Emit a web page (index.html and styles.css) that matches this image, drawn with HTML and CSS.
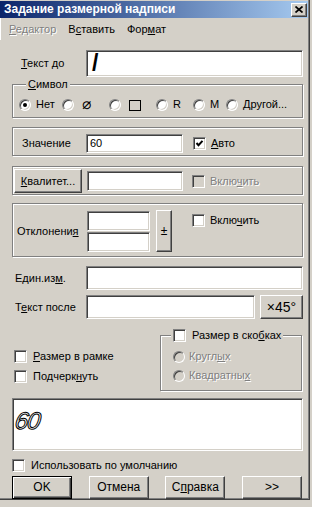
FILE: index.html
```html
<!DOCTYPE html>
<html lang="ru">
<head>
    <meta charset="UTF-8">
    <meta name="viewport" content="width=device-width, initial-scale=1.0">
    <title>Задание размерной надписи</title>
    <link rel="stylesheet" href="styles.css">
</head>
<body>
    <div class="window">
        <div class="titlebar">
            <span class="title">Задание размерной надписи</span>
            <span class="close-btn">
                <svg width="8" height="7" viewBox="0 0 8 7"><path d="M0.5 0.5 L7.5 6.5 M7.5 0.5 L0.5 6.5" stroke="#000" stroke-width="1.7" fill="none"/></svg>
            </span>
        </div>

        <div class="menubar">
            <span class="menu-item disabled"><u>Р</u>едактор</span>
            <span class="menu-item">В<u>с</u>тавить</span>
            <span class="menu-item">Фор<u>м</u>ат</span>
        </div>

        <div class="content">
            <div class="row row-before">
                <span class="row-label label-indent"><u>Т</u>екст до</span>
                <div class="edit"><span class="gost-slash">/</span></div>
            </div>

            <div class="group group-symbol">
                <div class="group-title"><u>С</u>имвол</div>
                <div class="symbol-options">
                    <span class="option"><span class="radio checked"></span><span>Нет</span></span>
                    <span class="option"><span class="radio"></span><span class="sym-diam">⌀</span></span>
                    <span class="option"><span class="radio"></span><span class="sym-square"></span></span>
                    <span class="option"><span class="radio"></span><span>R</span></span>
                    <span class="option"><span class="radio"></span><span>M</span></span>
                    <span class="option"><span class="radio"></span><span>Другой...</span></span>
                </div>
            </div>

            <div class="group group-value">
                <span class="value-label">Значение</span>
                <div class="edit edit-value">60</div>
                <span class="option check-right"><span class="check checked"><svg width="9" height="9" viewBox="0 0 9 9"><polyline points="1.5,4 3.5,6.2 7.5,1.8" stroke="#000" stroke-width="2" fill="none"/></svg></span><span><u>А</u>вто</span></span>
            </div>

            <div class="group group-quality">
                <button class="btn btn-quality"><span><u>К</u>валитет...</span></button>
                <div class="edit edit-quality"></div>
                <span class="option check-right disabled"><span class="check disabled"></span><span>Вклю<u>ч</u>ить</span></span>
            </div>

            <div class="group group-dev">
                <span class="dev-label">Отклонени<u>я</u></span>
                <div class="dev-inputs">
                    <div class="edit edit-dev"></div>
                    <div class="edit edit-dev"></div>
                </div>
                <button class="btn btn-pm">±</button>
                <span class="option dev-check"><span class="check"></span><span>Вклю<u>ч</u>ить</span></span>
            </div>

            <div class="row row-unit">
                <span class="row-label">Един.из<u>м</u>.</span>
                <div class="edit edit-line"></div>
            </div>

            <div class="row row-after">
                <span class="row-label">Т<u>е</u>кст после</span>
                <div class="edit edit-line"></div>
                <button class="btn btn-x45">×45°</button>
            </div>

            <div class="lower">
                <div class="lower-left">
                    <span class="option"><span class="check"></span><span><u>Р</u>азмер в рамке</span></span>
                    <span class="option"><span class="check"></span><span>Подчерк<u>н</u>уть</span></span>
                </div>
                <div class="group group-brackets">
                    <div class="group-title option"><span class="check"></span><span>Размер в ско<u>б</u>ках</span></div>
                    <div class="bracket-options">
                        <span class="option disabled"><span class="radio disabled"></span><span>Кругл<u>ы</u>х</span></span>
                        <span class="option disabled"><span class="radio disabled"></span><span>Квадратны<u>х</u></span></span>
                    </div>
                </div>
            </div>

            <div class="preview"><span class="preview-text">60</span></div>

            <span class="option default-check"><span class="check"></span><span>Использовать по умолчанию</span></span>

            <div class="buttons">
                <button class="btn btn-default">OK</button>
                <button class="btn">Отмена</button>
                <button class="btn"><span>С<u>п</u>равка</span></button>
                <button class="btn">&gt;&gt;</button>
            </div>
        </div>
    </div>
</body>
</html>
```

FILE: styles.css
```css
body {
    margin: 0;
    background-color: #d4d0c8;
    font-family: 'Liberation Sans', Arial, sans-serif;
    font-size: 11px;
    line-height: 13px;
    color: #000;
}
u {
    text-decoration: underline;
    text-underline-offset: 1px;
}
.window {
    width: 310px;
    height: 500px;
    box-sizing: border-box;
    padding-top: 1px;
    background-color: #d4d0c8;
    border-right: 1px solid #404040;
    border-bottom: 1px solid #404040;
    box-shadow: inset -1px -1px 0 #808080;
}

/* title and menu */
.titlebar {
    display: flex;
    align-items: center;
    justify-content: space-between;
    height: 17px;
    margin-right: 1px;
    padding: 0 1px 0 4px;
    background: linear-gradient(to right, #0a246a, #a6caf0);
}
.title {
    color: #fff;
    font-weight: bold;
    font-size: 12px;
}
.close-btn {
    display: flex;
    align-items: center;
    justify-content: center;
    width: 16px;
    height: 14px;
    box-sizing: border-box;
    background-color: #d4d0c8;
    border: 1px solid;
    border-color: #fff #404040 #404040 #fff;
    box-shadow: inset -1px -1px 0 #808080;
}
.menubar {
    display: flex;
    height: 22px;
    align-items: center;
    padding-left: 2px;
    border-left: 1px solid #fff;
}
.menu-item {
    padding: 0 6px;
}
.disabled {
    color: #808080;
    text-shadow: 1px 1px 0 #fff;
}

.content {
    padding: 0 6px 0 12px;
}

/* sunken edit field */
.edit {
    display: flex;
    align-items: center;
    box-sizing: border-box;
    padding: 0 3px;
    background-color: #fff;
    border: 1px solid;
    border-color: #808080 #fff #fff #808080;
    box-shadow: inset 1px 1px 0 #404040, inset -1px -1px 0 #d4d0c8;
}
.gost-slash {
    font-size: 23px;
    font-weight: bold;
    line-height: 23px;
    padding-left: 2px;
}

/* raised button */
.btn {
    display: flex;
    align-items: center;
    justify-content: center;
    box-sizing: border-box;
    padding: 0;
    font: inherit;
    color: #000;
    background-color: #d4d0c8;
    border: 1px solid;
    border-color: #fff #404040 #404040 #fff;
    box-shadow: inset -1px -1px 0 #808080;
}
.btn-default {
    border-color: #000;
    box-shadow: inset 1px 1px 0 #fff, inset -1px -1px 0 #404040, inset -2px -2px 0 #808080;
}

/* check boxes and radio buttons */
.option {
    display: flex;
    align-items: center;
    gap: 6px;
    height: 13px;
    white-space: nowrap;
}
.check {
    display: flex;
    align-items: center;
    justify-content: center;
    flex: none;
    width: 13px;
    height: 13px;
    box-sizing: border-box;
    background-color: #fff;
    border: 1px solid;
    border-color: #808080 #fff #fff #808080;
    box-shadow: inset 1px 1px 0 #404040, inset -1px -1px 0 #d4d0c8;
}
.check.disabled,
.radio.disabled {
    background-color: #d4d0c8;
}
.radio {
    display: flex;
    align-items: center;
    justify-content: center;
    flex: none;
    width: 12px;
    height: 12px;
    box-sizing: border-box;
    border-radius: 50%;
    background-color: #fff;
    border: 1px solid;
    border-color: #808080 #fff #fff #808080;
    box-shadow: inset 1px 1px 0 #404040, inset -1px -1px 0 #d4d0c8;
}
.radio.checked::after {
    content: "";
    width: 4px;
    height: 4px;
    border-radius: 50%;
    background-color: #000;
}

/* etched group frame */
.group {
    border: 1px solid #808080;
    box-shadow: inset 1px 1px 0 #fff, 1px 1px 0 #fff;
}
.group-title {
    width: fit-content;
    margin: -7px 0 0 7px;
    padding: 0 2px;
    background-color: #d4d0c8;
}

.row {
    display: flex;
    align-items: center;
}
.row-label {
    width: 74px;
    flex: none;
    box-sizing: border-box;
    padding-left: 3px;
}
.row-label.label-indent {
    padding-left: 9px;
}
.row-before {
    margin-top: 10px;
}
.row-before .edit {
    flex: 1;
    height: 27px;
}

.group-symbol {
    margin-top: 7px;
    padding: 0 0 6px 6px;
}
.symbol-options {
    display: grid;
    grid-template-columns: 43px 47px 47px 37px 33px auto;
    margin-top: 7px;
}
.symbol-options .option {
    gap: 5px;
}
.sym-diam {
    font-family: 'DejaVu Sans', sans-serif;
    font-size: 15px;
    line-height: 13px;
    padding-left: 3px;
}
.sym-square {
    width: 10px;
    height: 9px;
    border: 1px solid #000;
    margin: 2px 0 0 3px;
}

.group-value {
    display: flex;
    align-items: center;
    margin-top: 9px;
    padding: 6px 0 2px 9px;
}
.value-label {
    width: 64px;
}
.edit-value {
    width: 97px;
    height: 19px;
}
.check-right {
    margin-left: 10px;
    gap: 5px;
}

.group-quality {
    display: flex;
    align-items: center;
    margin-top: 10px;
    padding: 2px 0 1px 1px;
}
.btn-quality {
    width: 68px;
    height: 24px;
}
.edit-quality {
    width: 96px;
    height: 20px;
    margin-left: 5px;
}
.group-quality .check-right {
    margin-left: 9px;
}

.group-dev {
    display: flex;
    align-items: center;
    margin-top: 8px;
    padding: 6px 0 4px 4px;
}
.dev-label {
    width: 70px;
}
.dev-inputs {
    display: flex;
    flex-direction: column;
    gap: 1px;
    padding-top: 1px;
}
.edit-dev {
    width: 63px;
    height: 20px;
}
.btn-pm {
    width: 16px;
    height: 42px;
    margin-left: 6px;
    font-size: 12px;
}
.dev-check {
    align-self: flex-start;
    margin: 4px 0 0 20px;
    gap: 5px;
}

.row-unit {
    margin-top: 9px;
}
.row-after {
    margin-top: 5px;
}
.edit-line {
    flex: 1;
    height: 24px;
}
.btn-x45 {
    width: 43px;
    height: 24px;
    margin-left: 5px;
    font-size: 14px;
}

.lower {
    display: flex;
    margin-top: 16px;
}
.lower-left {
    display: flex;
    flex-direction: column;
    gap: 7px;
    padding: 15px 0 0 2px;
}
.group-brackets {
    width: 142px;
    box-sizing: border-box;
    margin: 0 1px 0 auto;
    padding: 0 0 8px 12px;
}
.group-brackets .group-title {
    margin-left: -2px;
}
.bracket-options {
    display: flex;
    flex-direction: column;
    gap: 6px;
    margin-top: 8px;
}
.bracket-options .option {
    gap: 4px;
}

.preview {
    height: 53px;
    margin-top: 7px;
    box-sizing: border-box;
    padding: 10px 0 0 2px;
    background-color: #fff;
    border: 1px solid;
    border-color: #808080 #fff #fff #808080;
    box-shadow: inset 1px 1px 0 #404040, inset -1px -1px 0 #d4d0c8;
}
.preview-text {
    display: inline-block;
    font-size: 24px;
    line-height: 24px;
    font-style: italic;
    letter-spacing: -1px;
    color: #fff;
    -webkit-text-stroke: 1px #000;
    transform: skewX(-8deg);
}

.default-check {
    margin-top: 8px;
}

.buttons {
    display: flex;
    justify-content: space-between;
    margin: 4px 1px 0 0;
}
.buttons .btn {
    width: 60px;
    height: 23px;
    font-size: 12px;
}
```
